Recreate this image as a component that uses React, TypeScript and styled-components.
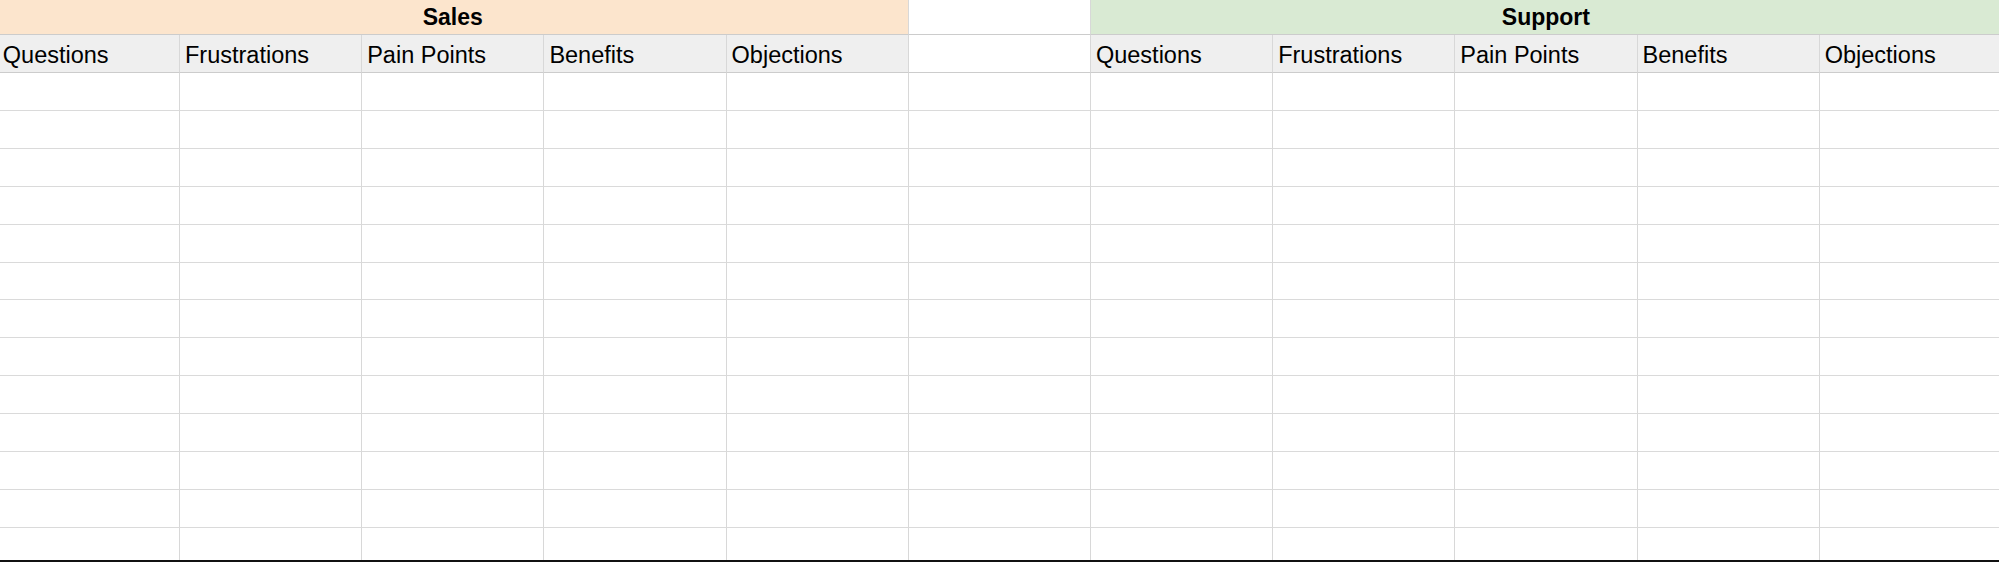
import React from "react";
import styled, { createGlobalStyle } from "styled-components";

const Global = createGlobalStyle`
  html, body { margin: 0; padding: 0; background: #ffffff; overflow: hidden; }
  body { font-family: "Liberation Sans", Arial, sans-serif; }
`;

const Frame = styled.div`
  width: 1999px;
  height: 562px;
  box-sizing: border-box;
  overflow: hidden;
  border-bottom: 2px solid #111111;
  background: #ffffff;
`;

const Sheet = styled.div`
  display: grid;
  grid-template-columns: repeat(11, 182.2px);
  grid-template-rows: 38px 38px;
  grid-auto-rows: 37.92px;
  margin: -3px 0 0 -2.2px;
  width: max-content;
`;

const Cell = styled.div<{ $bg?: string; $span?: number; $bold?: boolean; $center?: boolean; $head?: boolean }>`
  grid-column: span ${(p) => p.$span ?? 1};
  box-sizing: border-box;
  display: flex;
  align-items: flex-end;
  justify-content: ${(p) => (p.$center ? "center" : "flex-start")};
  padding: 0 5px 4px 5px;
  background: ${(p) => p.$bg ?? "#ffffff"};
  border-right: 1px solid #d8d8d8;
  border-bottom: 1px solid ${(p) => (p.$head ? "#cccccc" : "#dadada")};
  font-size: ${(p) => (p.$bold ? "23px" : "23.5px")};
  line-height: 26px;
  font-weight: ${(p) => (p.$bold ? 700 : 400)};
  color: #000000;
  white-space: nowrap;
  overflow: hidden;
`;

const headers = ["Questions", "Frustrations", "Pain Points", "Benefits", "Objections"];
const DATA_ROWS = 14;

export default function App() {
  return (
    <>
      <Global />
      <Frame>
        <Sheet>
          <Cell $span={5} $bg="#fce5cd" $bold $center $head>
            Sales
          </Cell>
          <Cell $head />
          <Cell $span={5} $bg="#d9ead3" $bold $center $head>
            Support
          </Cell>

          {headers.map((h) => (
            <Cell key={"s" + h} $bg="#efefef" $head>
              {h}
            </Cell>
          ))}
          <Cell $head />
          {headers.map((h) => (
            <Cell key={"p" + h} $bg="#efefef" $head>
              {h}
            </Cell>
          ))}

          {Array.from({ length: DATA_ROWS * 11 }).map((_, i) => (
            <Cell key={i} />
          ))}
        </Sheet>
      </Frame>
    </>
  );
}
